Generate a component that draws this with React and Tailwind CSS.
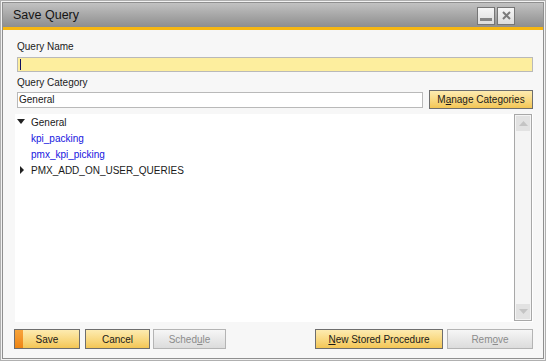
import React from "react";

const font = { fontFamily: '"Liberation Sans", Arial, sans-serif' };

function YButton({ children, className = "", save = false }) {
  return (
    <div
      className={
        "relative flex h-[20px] items-center justify-center border border-[#6e6e6e] bg-gradient-to-b from-[#fdebb0] via-[#f9da84] to-[#f3c654] text-[10px] text-[#1a1a1a] " +
        className
      }
    >
      {save && (
        <div className="absolute left-0 top-0 h-full w-[8px] bg-gradient-to-b from-[#f7a43a] to-[#ee8410]" />
      )}
      <span className="relative">{children}</span>
    </div>
  );
}

function DButton({ children, className = "" }) {
  return (
    <div
      className={
        "flex h-[20px] items-center justify-center border border-[#b4b4b4] bg-gradient-to-b from-[#f6f6f6] to-[#dcdcdc] text-[10px] text-[#8c8c8c] " +
        className
      }
    >
      {children}
    </div>
  );
}

export default function App() {
  return (
    <div
      className="h-[361px] w-[546px] border border-[#b0b0b0] bg-[#f2f2f2] p-px"
      style={font}
    >
      <div className="flex h-full flex-col border border-[#8f8f8f] bg-[#f7f7f7]">
        {/* title bar */}
        <div className="flex h-[24px] shrink-0 items-center justify-between bg-gradient-to-b from-[#c2c2c2] to-[#8e8e8e] pl-[10px] pr-[28px]">
          <span className="text-[12.5px] text-[#141414]">Save Query</span>
          <div className="flex gap-[2px] pt-px">
            <div className="flex h-[18px] w-[18px] items-end justify-center border border-[#767676] bg-gradient-to-b from-[#f6f6f6] to-[#dcdcdc] pb-[3px]">
              <div className="h-[3px] w-[12px] bg-[#858585]" />
            </div>
            <div className="flex h-[18px] w-[18px] items-center justify-center border border-[#767676] bg-gradient-to-b from-[#f6f6f6] to-[#dcdcdc]">
              <svg width="9" height="9" viewBox="0 0 9 9">
                <path d="M1 1 L8 8 M8 1 L1 8" stroke="#7a7a7a" strokeWidth="2" />
              </svg>
            </div>
          </div>
        </div>
        <div className="h-[3px] shrink-0 bg-[#f6b712]" />

        {/* content */}
        <div className="flex flex-1 flex-col pl-[12px] pr-[10px] pt-[10px] text-[10px] text-[#1a1a1a]">
          <div className="pl-[2px] leading-[13px]">Query Name</div>
          <div className="mt-[4px] ml-[2px] flex h-[15px] items-center border border-[#b9b9b9] bg-[#fdee9e] pl-[2px]">
            <div className="h-[11px] w-px bg-[#101060]" />
          </div>
          <div className="mt-[4px] pl-[2px] leading-[13px]">Query Category</div>
          <div className="mt-px ml-[2px] flex items-center gap-[6px]">
            <div className="flex h-[16px] flex-1 items-center border border-[#b9b9b9] bg-white pl-px">
              General
            </div>
            <YButton className="w-[104px] !h-[19px]">
              M<u>a</u>nage Categories
            </YButton>
          </div>

          {/* tree */}
          <div className="mt-[5px] flex h-[208px] bg-white pl-[2px] pb-px pr-[1px]">
            <div className="flex-1">
              <div className="flex h-[16px] items-center">
                <svg width="14" height="8" viewBox="0 0 14 8">
                  <path d="M0 1 L8 1 L4 6 Z" fill="#222" />
                </svg>
                <span>General</span>
              </div>
              <div className="flex h-[16px] items-center pl-[14px] text-[#1515e0]">kpi_packing</div>
              <div className="flex h-[16px] items-center pl-[14px] text-[#1515e0]">pmx_kpi_picking</div>
              <div className="flex h-[16px] items-center">
                <svg width="14" height="10" viewBox="0 0 14 10">
                  <path d="M3 1 L7 5 L3 9 Z" fill="#222" />
                </svg>
                <span>PMX_ADD_ON_USER_QUERIES</span>
              </div>
            </div>
            <div className="flex w-[18px] flex-col justify-between border border-[#a8a8a8] bg-[#f4f4f4] p-px">
              <div className="flex h-[15px] items-center justify-center bg-[#e2e2e2]">
                <svg width="9" height="5" viewBox="0 0 9 5">
                  <path d="M0 5 L4.5 0 L9 5 Z" fill="#c4c4c4" />
                </svg>
              </div>
              <div className="flex h-[15px] items-center justify-center bg-[#e2e2e2]">
                <svg width="9" height="5" viewBox="0 0 9 5">
                  <path d="M0 0 L4.5 5 L9 0 Z" fill="#c4c4c4" />
                </svg>
              </div>
            </div>
          </div>

          {/* buttons */}
          <div className="mt-[7px] flex items-center">
            <YButton save className="-ml-px w-[66px]">Save</YButton>
            <YButton className="ml-[5px] w-[65px]">Cancel</YButton>
            <DButton className="ml-[3px] w-[73px]">
              Sched<u>u</u>le
            </DButton>
            <div className="flex-1" />
            <YButton className="w-[128px]">
              <u>N</u>ew Stored Procedure
            </YButton>
            <DButton className="ml-[4px] w-[86px]">
              Rem<u>o</u>ve
            </DButton>
          </div>
        </div>
      </div>
    </div>
  );
}
